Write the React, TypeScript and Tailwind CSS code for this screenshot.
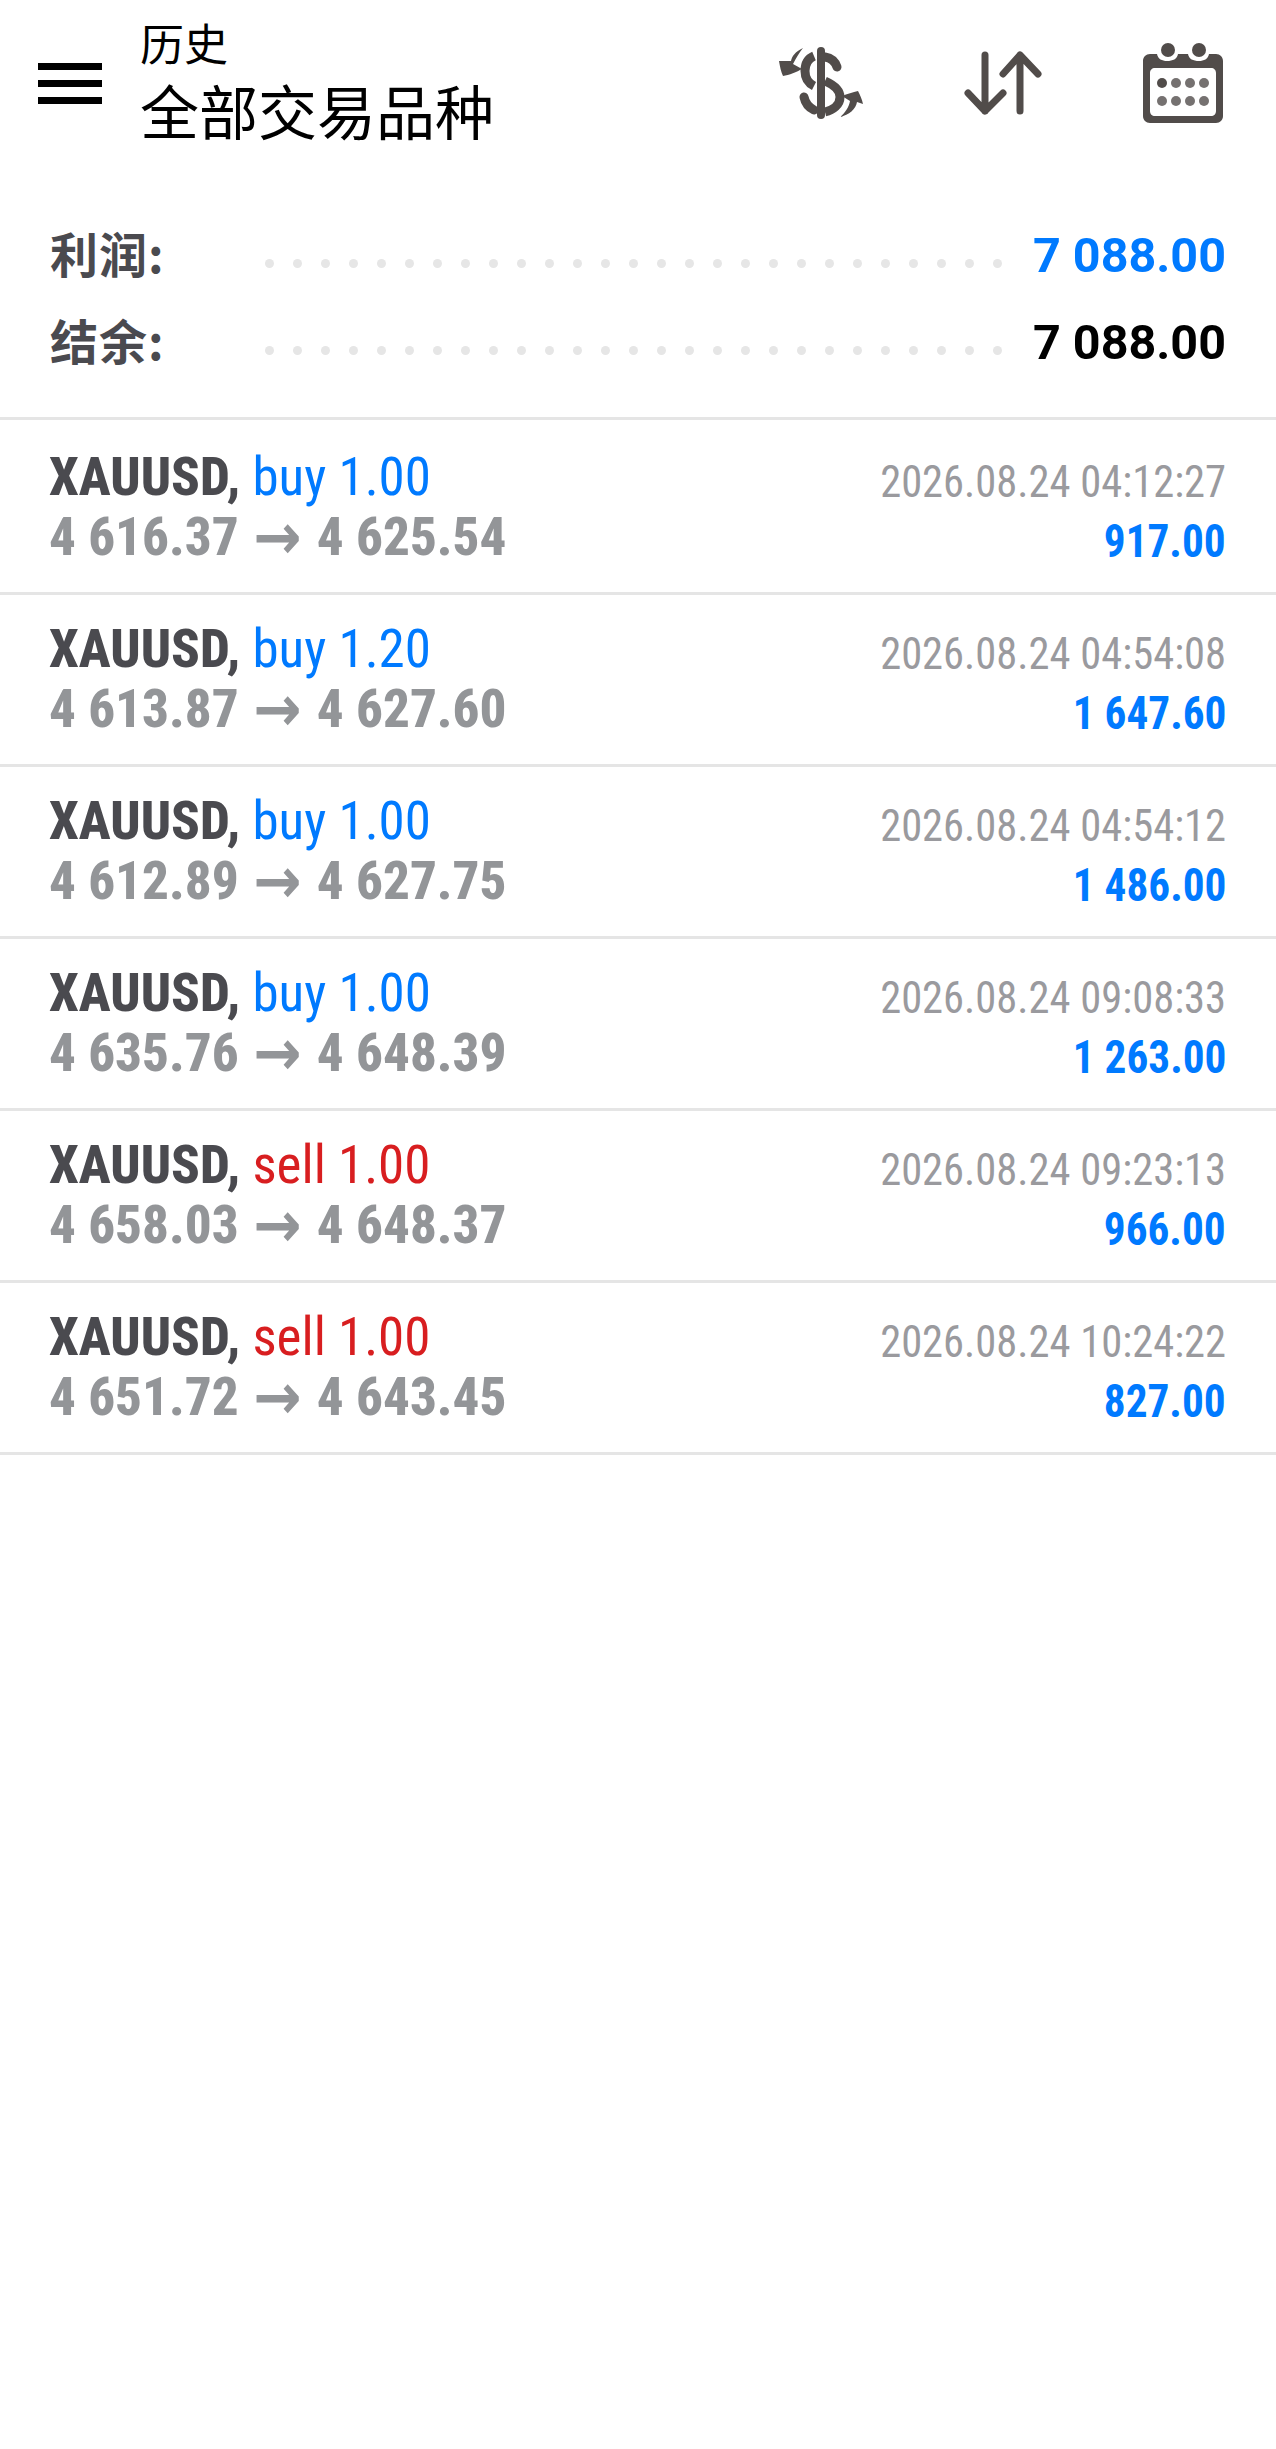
const rows = [
  { side: "buy", lot: "1.00", open: "4 616.37", close: "4 625.54", time: "2026.08.24 04:12:27", profit: "917.00" },
  { side: "buy", lot: "1.20", open: "4 613.87", close: "4 627.60", time: "2026.08.24 04:54:08", profit: "1 647.60" },
  { side: "buy", lot: "1.00", open: "4 612.89", close: "4 627.75", time: "2026.08.24 04:54:12", profit: "1 486.00" },
  { side: "buy", lot: "1.00", open: "4 635.76", close: "4 648.39", time: "2026.08.24 09:08:33", profit: "1 263.00" },
  { side: "sell", lot: "1.00", open: "4 658.03", close: "4 648.37", time: "2026.08.24 09:23:13", profit: "966.00" },
  { side: "sell", lot: "1.00", open: "4 651.72", close: "4 643.45", time: "2026.08.24 10:24:22", profit: "827.00" },
];

function DollarIcon() {
  return (
    <svg width="84" height="72" viewBox="0 0 84 72" className="shrink-0">
      <g fill="none" stroke="#514c4a" strokeLinecap="round">
        <path d="M42 4V68" strokeWidth="8" />
        <g strokeWidth="9">
          <path d="M58 20C56 14 52 11 46 10" />
          <path d="M35 9C28 12 26 17 26 24C26 31 29 36 35 39" strokeLinecap="butt" />
          <path d="M46 34C55 38 61 43 61 50C61 58 54 63 46 65" strokeLinecap="butt" />
          <path d="M25 50C26 55 29 60 35 63" />
        </g>
      </g>
      <path d="M24 1C16 5 13 9 12 14L0 14C1 20 2 25 4 29C10 28 18 25 23 22L14 17C17 11 20 6 24 1Z" fill="#514c4a" />
      <path d="M61 70C66 66 70 60 71 54L63 49C68 47 74 45 79 44C81 48 83 52 84 57L78 55C77 62 70 68 61 70Z" fill="#514c4a" />
    </svg>
  );
}

function SortIcon() {
  return (
    <svg width="78" height="64" viewBox="0 0 78 64" className="shrink-0">
      <g fill="none" stroke="#514c4a" strokeWidth="7" strokeLinecap="round" strokeLinejoin="round">
        <path d="M21 4V60M4 42L21 60L39 42" />
        <path d="M56 60V4M39 23L56 4L74 23" />
      </g>
    </svg>
  );
}

function CalendarIcon() {
  return (
    <svg width="80" height="80" viewBox="0 0 80 80" className="shrink-0">
      <path d="M7 11H14C15 16 19 18 24 18C30 18 34 16 35 11H45C46 16 50 18 56 18C61 18 65 16 66 11H73C77 11 80 14 80 18V73C80 77 77 80 73 80H7C3 80 0 77 0 73V18C0 14 3 11 7 11ZM12 25C9 25 7 27 7 30V68C7 71 9 73 12 73H68C71 73 73 71 73 68V30C73 27 71 25 68 25Z" fill="#514c4a" fillRule="evenodd" />
      <circle cx="25" cy="7" r="7" fill="#514c4a" />
      <circle cx="56" cy="7" r="7" fill="#514c4a" />
      {[19, 33, 47, 61].map((x) => (
        <g key={x}>
          <circle cx={x} cy="40" r="5" fill={x === 19 ? "#514c4a" : "#757170"} />
          <circle cx={x} cy="58" r="5" fill="#757170" />
        </g>
      ))}
    </svg>
  );
}

function SummaryRow({ label, value, color }: { label: string; value: string; color: string }) {
  return (
    <div className="flex h-[87px] items-center">
      <div className="w-[215px] shrink-0 -translate-y-[4px] font-['Noto_Sans_CJK_SC',sans-serif] text-[48px] font-bold leading-none tracking-[1px] text-[#4a4a4f]">{label}</div>
      <div className="flex w-[740px] shrink-0 translate-y-[8px] gap-[19px]">
        {Array.from({ length: 27 }).map((_, i) => (
          <span key={i} className="size-[9px] shrink-0 rounded-full bg-[#e6e6e6]" />
        ))}
      </div>
      <div className={`ml-auto translate-y-[1px] text-[48.5px] font-bold leading-none ${color}`}>{value}</div>
    </div>
  );
}

export default function App() {
  return (
    <div className="min-h-[2449px] w-[1276px] bg-white font-['Roboto',sans-serif]">
      <header className="flex h-[166px] items-center pl-[38px] pr-[53px]">
        <div className="flex w-[64px] shrink-0 flex-col gap-[10px]">
          <span className="h-[7px] bg-black" />
          <span className="h-[7px] bg-black" />
          <span className="h-[7px] bg-black" />
        </div>
        <div className="ml-[38px] flex -translate-y-[1px] flex-col font-['Noto_Sans_CJK_SC',sans-serif] text-black">
          <span className="text-[44px] leading-[56px]">历史</span>
          <span className="text-[59px] leading-[80px]">全部交易品种</span>
        </div>
        <div className="ml-auto flex items-center gap-[101px]">
          <DollarIcon />
          <SortIcon />
          <CalendarIcon />
        </div>
      </header>
      <section className="flex h-[254px] flex-col border-b-[3px] border-[#e5e5e5] pl-[50px] pr-[50px] pt-[46px]">
        <SummaryRow label="利润:" value="7 088.00" color="text-[#007aff]" />
        <SummaryRow label="结余:" value="7 088.00" color="text-black" />
      </section>
      <div>
        {rows.map((r) => (
          <div key={r.time} className="flex h-[172px] justify-between border-b-[3px] border-[#e5e5e5] pl-[49px] pr-[50px] pt-[24px] font-stretch-[75%] first:h-[175px] first:pt-[27px]">
            <div className="flex flex-col text-[53px] leading-[60px]">
              <div className="whitespace-nowrap">
                <span className="font-extrabold text-[#4a4a4f]">XAUUSD,</span>{" "}
                <span className={r.side === "buy" ? "text-[#007aff]" : "text-[#d81e20]"}>{r.side} {r.lot}</span>
              </div>
              <div className="flex items-center gap-[15px] whitespace-nowrap font-extrabold text-[#939598]">
                <span>{r.open}</span>
                <span className="font-['DejaVu_Sans',sans-serif] text-[64px] leading-[60px]">→</span>
                <span>{r.close}</span>
              </div>
            </div>
            <div className="flex flex-col items-end">
              <div className="mt-[7px] origin-right scale-x-[0.945] whitespace-nowrap text-[45px] leading-[56px] text-[#9a9a9e]">{r.time}</div>
              <div className="mt-[3px] origin-right scale-x-[0.94] whitespace-nowrap text-[46px] font-bold leading-[56px] text-[#007aff]">{r.profit}</div>
            </div>
          </div>
        ))}
      </div>
    </div>
  );
}
